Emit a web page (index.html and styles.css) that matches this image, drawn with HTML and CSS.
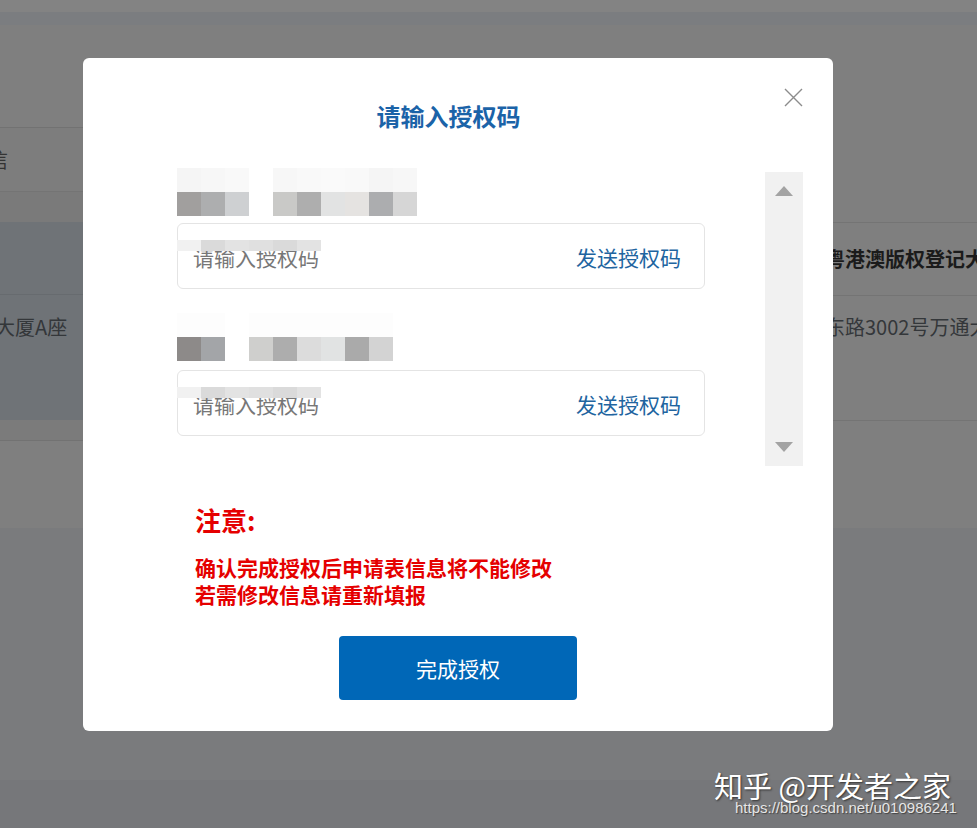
FILE: index.html
```html
<!DOCTYPE html>
<html lang="zh-CN">
<head>
<meta charset="utf-8">
<title>请输入授权码</title>
<link rel="stylesheet" href="styles.css">
</head>
<body>
<div class="page">
  <div class="topbar"></div>
  <div class="subbar"></div>
  <div class="tables">
    <div class="col-left">
      <div class="lspace"></div>
      <div class="lrow1"><span class="cut-text">通信</span></div>
      <div class="lband"></div>
      <div class="lhl">
        <div class="lhl-a"></div>
        <div class="lhl-b"><span class="cut-text2">大厦A座</span></div>
      </div>
      <div class="lband2"></div>
    </div>
    <div class="col-mid"></div>
    <div class="col-right">
      <div class="rspace"></div>
      <div class="rrow1"><span class="rtext bold">粤港澳版权登记大厅</span></div>
      <div class="rrow2"><span class="rtext">东路3002号万通大厦</span></div>
    </div>
  </div>
  <div class="band-dark"></div>
  <div class="band-bottom"></div>
</div>

<div class="modal">
  <button class="close" aria-label="关闭">
    <svg width="19" height="19" viewBox="0 0 19 19"><path d="M1 1 L18 18 M18 1 L1 18" stroke="#8c8c8c" stroke-width="1.4" fill="none"/></svg>
  </button>
  <h2 class="title">请输入授权码</h2>
  <div class="scroll">
    <div class="scroll-content">
      <div class="item">
        <div class="mosaic">
          <i class="c l1"></i><i class="c l2"></i><i class="c l3"></i><i class="c"></i><i class="c l2"></i><i class="c l3"></i><i class="c l4"></i><i class="c l3"></i><i class="c l1"></i><i class="c l2"></i>
          <i class="c d1"></i><i class="c d2"></i><i class="c d3"></i><i class="c"></i><i class="c d4"></i><i class="c d5"></i><i class="c d6"></i><i class="c d7"></i><i class="c d8"></i><i class="c d9"></i>
        </div>
        <div class="field">
          <span class="placeholder">请输入授权码</span>
          <span class="send">发送授权码</span>
          <div class="smudge"><i class="s s1"></i><i class="s s2"></i><i class="s s3"></i><i class="s s4"></i><i class="s s2"></i><i class="s s3"></i></div>
        </div>
      </div>
      <div class="item item2">
        <div class="mosaic">
          <i class="c l5"></i><i class="c l5"></i><i class="c"></i><i class="c l5"></i><i class="c l5"></i><i class="c l5"></i><i class="c l5"></i><i class="c l5"></i><i class="c l5"></i><i class="c"></i>
          <i class="c e1"></i><i class="c e2"></i><i class="c"></i><i class="c e3"></i><i class="c e4"></i><i class="c e5"></i><i class="c e6"></i><i class="c e7"></i><i class="c e8"></i><i class="c"></i>
        </div>
        <div class="field">
          <span class="placeholder">请输入授权码</span>
          <span class="send">发送授权码</span>
          <div class="smudge"><i class="s s1"></i><i class="s s2"></i><i class="s s3"></i><i class="s s4"></i><i class="s s2"></i><i class="s s3"></i></div>
        </div>
      </div>
    </div>
    <div class="scrollbar">
      <span class="arrow up"></span>
      <span class="arrow down"></span>
    </div>
  </div>
  <div class="notice">
    <div class="notice-title">注意:</div>
    <p class="notice-text">确认完成授权后申请表信息将不能修改<br>若需修改信息请重新填报</p>
  </div>
  <div class="actions">
    <button class="primary">完成授权</button>
  </div>
</div>

<div class="watermark">
  <div class="wm-main">知乎 @开发者之家</div>
  <div class="wm-url">https://blog.csdn.net/u010986241</div>
</div>
</body>
</html>
```
FILE: styles.css
```css
* { box-sizing: border-box; }
html, body {
  margin: 0;
  padding: 0;
  width: 977px;
  height: 828px;
  overflow: hidden;
  background: #7f7f7f;
  font-family: "Noto Sans CJK SC", "Noto Sans", sans-serif;
}
.page {
  width: 977px;
  height: 828px;
  display: flex;
  flex-direction: column;
}
.topbar { height: 12px; background: #838383; }
.subbar { height: 13px; background: #7b7d80; }
.tables {
  height: 503px;
  display: grid;
  grid-template-columns: 83px 1fr 144px;
  background: #7f7f7f;
}
.col-left, .col-right { display: flex; flex-direction: column; }
.lspace { height: 102px; }
.lrow1 {
  height: 65px;
  border-top: 1px solid #727272;
  border-bottom: 1px solid #747474;
  background: #7d7d7d;
  display: flex;
  align-items: center;
  overflow: hidden;
  white-space: nowrap;
}
.cut-text {
  font-size: 20px;
  line-height: 26px;
  color: #333;
  margin-left: -32px;
}
.lband { height: 30px; background: #7a7a7a; }
.lhl { height: 198px; background: #6f7377; display: flex; flex-direction: column; }
.lhl-a { height: 73px; border-bottom: 1px solid #676b6f; }
.lhl-b {
  padding-top: 18px;
  overflow: hidden;
  white-space: nowrap;
}
.cut-text2 {
  font-size: 20px;
  line-height: 28px;
  color: #34373a;
  margin-left: -5px;
  display: inline-block;
}
.lband2 { height: 21px; background: #7b7b7b; border-bottom: 1px solid #727272; }

.rspace { height: 197px; }
.rrow1 {
  height: 73px;
  border-top: 1px solid #747474;
  display: flex;
  align-items: center;
  white-space: nowrap;
}
.rrow2 {
  height: 126px;
  border-top: 1px solid #747474;
  border-bottom: 1px solid #747474;
  padding-top: 17px;
  white-space: nowrap;
}
.rtext {
  font-size: 20px;
  line-height: 28px;
  color: #34373a;
  margin-left: -8px;
  display: inline-block;
}
.rtext.bold { font-weight: 700; color: #1b1b1b; }

.band-dark { height: 252px; background: #7a7b7d; }
.band-bottom { flex: 1; background: #76777a; }

/* modal */
.modal {
  position: absolute;
  left: 83px;
  top: 58px;
  width: 750px;
  height: 673px;
  background: #fff;
  border-radius: 6px;
  padding: 42px 0 31px;
  display: flex;
  flex-direction: column;
}
.close {
  position: absolute;
  top: 30px;
  right: 30px;
  width: 19px;
  height: 19px;
  padding: 0;
  border: 0;
  background: none;
  display: block;
}
.close svg { display: block; }
.title {
  margin: 0;
  padding-right: 19px;
  text-align: center;
  font-size: 24px;
  line-height: 32px;
  font-weight: 700;
  color: #1b63a8;
}
.scroll {
  margin-top: 36px;
  height: 298px;
  display: flex;
  padding-left: 94px;
  padding-right: 30px;
}
.scroll-content {
  width: 528px;
  display: flex;
  flex-direction: column;
  gap: 24px;
}
.item { display: flex; flex-direction: column; gap: 7px; }
.item2 { gap: 9px; }
.mosaic {
  display: grid;
  grid-template-columns: repeat(10, 24px);
  grid-auto-rows: 24px;
}
.c { display: block; }
.l1 { background: #f5f5f5; }
.l2 { background: #f7f7f7; }
.l3 { background: #f9f9f9; }
.l4 { background: #fafafa; }
.l5 { background: #fdfdfd; }
.d1 { background: #a19f9e; }
.d2 { background: #adaeaf; }
.d3 { background: #ced0d2; }
.d4 { background: #c9c9c7; }
.d5 { background: #aeaeae; }
.d6 { background: #e2e3e3; }
.d7 { background: #e5e3e1; }
.d8 { background: #acadaf; }
.d9 { background: #d6d6d6; }
.e1 { background: #8d8a89; }
.e2 { background: #a3a5a8; }
.e3 { background: #cfcfcd; }
.e4 { background: #adadad; }
.e5 { background: #dcdcdc; }
.e6 { background: #e1e3e3; }
.e7 { background: #aaaaaa; }
.e8 { background: #d3d3d3; }

.field {
  position: relative;
  height: 66px;
  border: 1px solid #e4e4e4;
  border-radius: 6px;
  display: flex;
  align-items: center;
  justify-content: space-between;
  padding: 2px 23px 0 15px;
}
.placeholder {
  font-size: 21px;
  line-height: 28px;
  color: #777;
}
.send {
  font-size: 21px;
  line-height: 28px;
  color: #21649f;
}
.smudge {
  position: absolute;
  left: -1px;
  top: 16px;
  display: flex;
}
.s { display: block; width: 24px; height: 11px; }
.s1 { background: #f1f1f1; }
.s2 { background: #dadada; }
.s3 { background: #e3e3e3; }
.s4 { background: #e0e0e0; }

.scrollbar {
  margin-left: auto;
  margin-top: 4px;
  width: 38px;
  background: #f1f1f1;
  display: flex;
  flex-direction: column;
  justify-content: space-between;
  align-items: center;
  padding: 14px 0 14px;
}
.arrow {
  display: block;
  width: 0;
  height: 0;
  border-left: 9px solid transparent;
  border-right: 9px solid transparent;
}
.arrow.up { border-bottom: 10px solid #a3a3a3; }
.arrow.down { border-top: 10px solid #a3a3a3; }

.notice {
  margin-top: 37px;
  padding-left: 112px;
  color: #e50000;
  font-weight: 700;
}
.notice-title {
  font-size: 26px;
  line-height: 34px;
}
.notice-text {
  margin: 17px 0 0;
  font-size: 21px;
  line-height: 27px;
}
.actions {
  margin-top: 28px;
  display: flex;
  justify-content: center;
}
.primary {
  width: 238px;
  height: 64px;
  border: 0;
  border-radius: 4px;
  background: #0067b7;
  color: #fff;
  font-family: "Noto Sans CJK SC", "Noto Sans", sans-serif;
  font-size: 21px;
  line-height: 28px;
  padding: 0;
}

.watermark {
  position: absolute;
  left: 714px;
  top: 768px;
}
.wm-main {
  font-size: 29px;
  line-height: 34px;
  color: #fff;
  white-space: nowrap;
  text-shadow: 1px 1px 2px #333;
}
.wm-url {
  margin-top: -3px;
  margin-left: 21px;
  font-family: "Liberation Sans", Arial, sans-serif;
  font-size: 15px;
  line-height: 18px;
  color: #e6e6e6;
  white-space: nowrap;
  text-shadow: 1px 1px 1px #444;
}
```
